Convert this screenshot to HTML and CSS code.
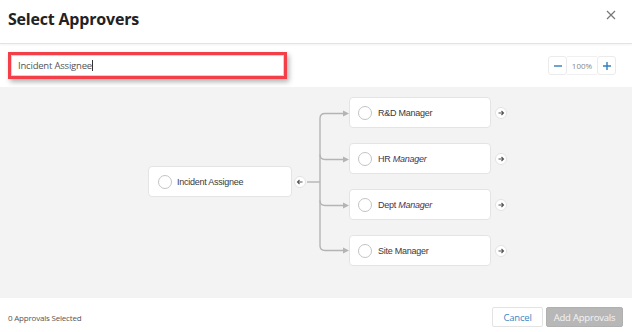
FILE: index.html
```html
<!DOCTYPE html>
<html lang="en">
<head>
    <meta charset="UTF-8">
    <title>Select Approvers</title>
    <link rel="stylesheet" href="styles.css">
</head>
<body>
    <div class="dialog">
        <!-- Header -->
        <header class="dialog-header">
            <h1 class="title">Select Approvers</h1>
            <button class="close-btn" aria-label="Close">
                <svg width="10" height="10" viewBox="0 0 10 10"><path d="M1 1 L9 9 M9 1 L1 9" stroke="#777" stroke-width="1.2" fill="none"/></svg>
            </button>
        </header>

        <!-- Toolbar -->
        <div class="toolbar">
            <div class="search-box">
                <span class="search-text">Incident Assignee</span><span class="caret"></span>
            </div>
            <div class="zoom-control">
                <button class="zoom-btn">
                    <svg width="10" height="10" viewBox="0 0 10 10"><path d="M1 5 H9" stroke="#2f7fbf" stroke-width="1.4"/></svg>
                </button>
                <span class="zoom-value">100%</span>
                <button class="zoom-btn">
                    <svg width="10" height="10" viewBox="0 0 10 10"><path d="M1 5 H9 M5 1 V9" stroke="#2f7fbf" stroke-width="1.4"/></svg>
                </button>
            </div>
        </div>

        <!-- Flow canvas -->
        <div class="canvas">
            <div class="flow">
                <div class="node node-root">
                    <span class="radio"></span>
                    <span class="node-label">Incident Assignee</span>
                </div>
                <span class="link-btn back">
                    <svg width="12" height="12" viewBox="0 0 12 12"><circle cx="6" cy="6" r="5.5" fill="#fff" stroke="#e2e2e2"/><path d="M8.5 6 H3.5 M5.5 4 L3.5 6 L5.5 8" stroke="#555" stroke-width="1.1" fill="none"/></svg>
                </span>
                <svg class="connectors" width="43" height="168" viewBox="0 0 43 168">
                    <g stroke="#b4b4b4" stroke-width="1.4" fill="none">
                        <path d="M1 84 H14"/>
                        <path d="M39 15.5 H19 Q14 15.5 14 20.5 V147.5 Q14 152.5 19 152.5 H39"/>
                        <path d="M14 56.5 Q14 61.5 19 61.5 H39"/>
                        <path d="M14 102.5 Q14 107.5 19 107.5 H39"/>
                    </g>
                    <g fill="#b4b4b4">
                        <path d="M37 12.5 L43 15.5 L37 18.5 Z"/>
                        <path d="M37 58.5 L43 61.5 L37 64.5 Z"/>
                        <path d="M37 104.5 L43 107.5 L37 110.5 Z"/>
                        <path d="M37 149.5 L43 152.5 L37 155.5 Z"/>
                    </g>
                </svg>
                <div class="branch-list">
                    <div class="branch">
                        <div class="node">
                            <span class="radio"></span>
                            <span class="node-label">R&amp;D Manager</span>
                        </div>
                        <span class="link-btn">
                            <svg width="12" height="12" viewBox="0 0 12 12"><circle cx="6" cy="6" r="5.5" fill="#fff" stroke="#e2e2e2"/><path d="M3.5 6 H8.5 M6.5 4 L8.5 6 L6.5 8" stroke="#555" stroke-width="1.1" fill="none"/></svg>
                        </span>
                    </div>
                    <div class="branch">
                        <div class="node">
                            <span class="radio"></span>
                            <span class="node-label tinted">HR <em>Manager</em></span>
                        </div>
                        <span class="link-btn">
                            <svg width="12" height="12" viewBox="0 0 12 12"><circle cx="6" cy="6" r="5.5" fill="#fff" stroke="#e2e2e2"/><path d="M3.5 6 H8.5 M6.5 4 L8.5 6 L6.5 8" stroke="#555" stroke-width="1.1" fill="none"/></svg>
                        </span>
                    </div>
                    <div class="branch">
                        <div class="node">
                            <span class="radio"></span>
                            <span class="node-label tinted">Dept <em>Manager</em></span>
                        </div>
                        <span class="link-btn">
                            <svg width="12" height="12" viewBox="0 0 12 12"><circle cx="6" cy="6" r="5.5" fill="#fff" stroke="#e2e2e2"/><path d="M3.5 6 H8.5 M6.5 4 L8.5 6 L6.5 8" stroke="#555" stroke-width="1.1" fill="none"/></svg>
                        </span>
                    </div>
                    <div class="branch">
                        <div class="node">
                            <span class="radio"></span>
                            <span class="node-label">Site Manager</span>
                        </div>
                        <span class="link-btn">
                            <svg width="12" height="12" viewBox="0 0 12 12"><circle cx="6" cy="6" r="5.5" fill="#fff" stroke="#e2e2e2"/><path d="M3.5 6 H8.5 M6.5 4 L8.5 6 L6.5 8" stroke="#555" stroke-width="1.1" fill="none"/></svg>
                        </span>
                    </div>
                </div>
            </div>
        </div>

        <!-- Footer -->
        <footer class="dialog-footer">
            <span class="selected-count">0 Approvals Selected</span>
            <div class="actions">
                <button class="btn btn-cancel">Cancel</button>
                <button class="btn btn-add" disabled>Add Approvals</button>
            </div>
        </footer>
    </div>
</body>
</html>
```

FILE: styles.css
```css
* {
    margin: 0;
    padding: 0;
    box-sizing: border-box;
}

body {
    font-family: 'Open Sans', 'Liberation Sans', sans-serif;
    background: #fff;
    color: #333;
    width: 632px;
    height: 332px;
    overflow: hidden;
}

.dialog {
    display: flex;
    flex-direction: column;
    height: 332px;
}

/* Header */
.dialog-header {
    height: 44px;
    display: flex;
    align-items: center;
    justify-content: space-between;
    padding: 0 16px 6px 8px;
    border-bottom: 1px solid #e3e3e3;
    box-shadow: 0 1px 2px rgba(0, 0, 0, 0.05);
}

.title {
    font-size: 16px;
    font-weight: 700;
    color: #222;
    letter-spacing: -0.2px;
}

.close-btn {
    background: none;
    border: none;
    display: flex;
    margin-top: -8px;
}

/* Toolbar */
.toolbar {
    height: 43px;
    display: flex;
    align-items: flex-start;
    justify-content: space-between;
    padding: 8px 16px 0 8px;
}

.search-box {
    width: 279px;
    height: 27px;
    border: 3px solid #f33f48;
    box-shadow: inset 0 0 0 1px #d6d6d6, 2px 3px 5px rgba(0, 0, 0, 0.3);
    display: flex;
    align-items: center;
    padding-left: 7px;
    background: #fff;
}

.search-text {
    font-size: 9.5px;
    color: #555;
    letter-spacing: -0.2px;
}

.caret {
    width: 1px;
    height: 11px;
    background: #333;
}

.zoom-control {
    display: flex;
    margin-top: 4px;
}

.zoom-btn {
    width: 19px;
    height: 19px;
    display: flex;
    align-items: center;
    justify-content: center;
    background: #fff;
    border: 1px solid #ebebeb;
    border-radius: 3px;
}

.zoom-value {
    width: 30px;
    height: 19px;
    display: flex;
    align-items: center;
    justify-content: center;
    font-size: 8px;
    color: #888;
    border-top: 1px solid #f0f0f0;
    border-bottom: 1px solid #f0f0f0;
}

/* Canvas */
.canvas {
    height: 211px;
    background: #f3f3f3;
    padding: 10px 0 0 148px;
}

.flow {
    display: flex;
    align-items: center;
}

.node {
    width: 142px;
    height: 31px;
    background: #fff;
    border: 1px solid #e4e4e4;
    border-radius: 4px;
    display: flex;
    align-items: center;
    gap: 6px;
    padding-left: 8px;
}

.node-root {
    width: 144px;
    padding-left: 9px;
    gap: 5px;
}

.radio {
    width: 14px;
    height: 14px;
    border: 1px solid #c4c4c4;
    border-radius: 50%;
    background: #fff;
    flex-shrink: 0;
}

.node-label {
    font-family: 'Liberation Sans', Arial, sans-serif;
    font-size: 9px;
    color: #3a3a3a;
    letter-spacing: -0.25px;
}

.node-label.tinted {
    color: #3c3560;
}

.node-label em {
    font-style: italic;
}

.link-btn {
    display: flex;
    width: 12px;
    height: 12px;
}

.link-btn.back {
    margin-left: 2px;
}

.connectors {
    display: block;
}

.branch-list {
    display: flex;
    flex-direction: column;
    gap: 15px;
}

.branch {
    display: flex;
    align-items: center;
    gap: 4px;
}

/* Footer */
.dialog-footer {
    flex: 1;
    display: flex;
    align-items: center;
    justify-content: space-between;
    padding: 4px 9px 0 8px;
}

.selected-count {
    font-size: 8px;
    color: #555;
    letter-spacing: -0.2px;
}

.actions {
    display: flex;
    gap: 3px;
}

.btn {
    height: 20px;
    font-family: 'Open Sans', 'Liberation Sans', sans-serif;
    font-size: 9.5px;
    border-radius: 2px;
    letter-spacing: -0.2px;
}

.btn-cancel {
    width: 51px;
    background: #fff;
    border: 1px solid #e3e3e3;
    color: #3b87c2;
}

.btn-add {
    width: 77px;
    background: #b7b7b7;
    border: 1px solid #b0b0b0;
    color: #f4f4f4;
}
```
